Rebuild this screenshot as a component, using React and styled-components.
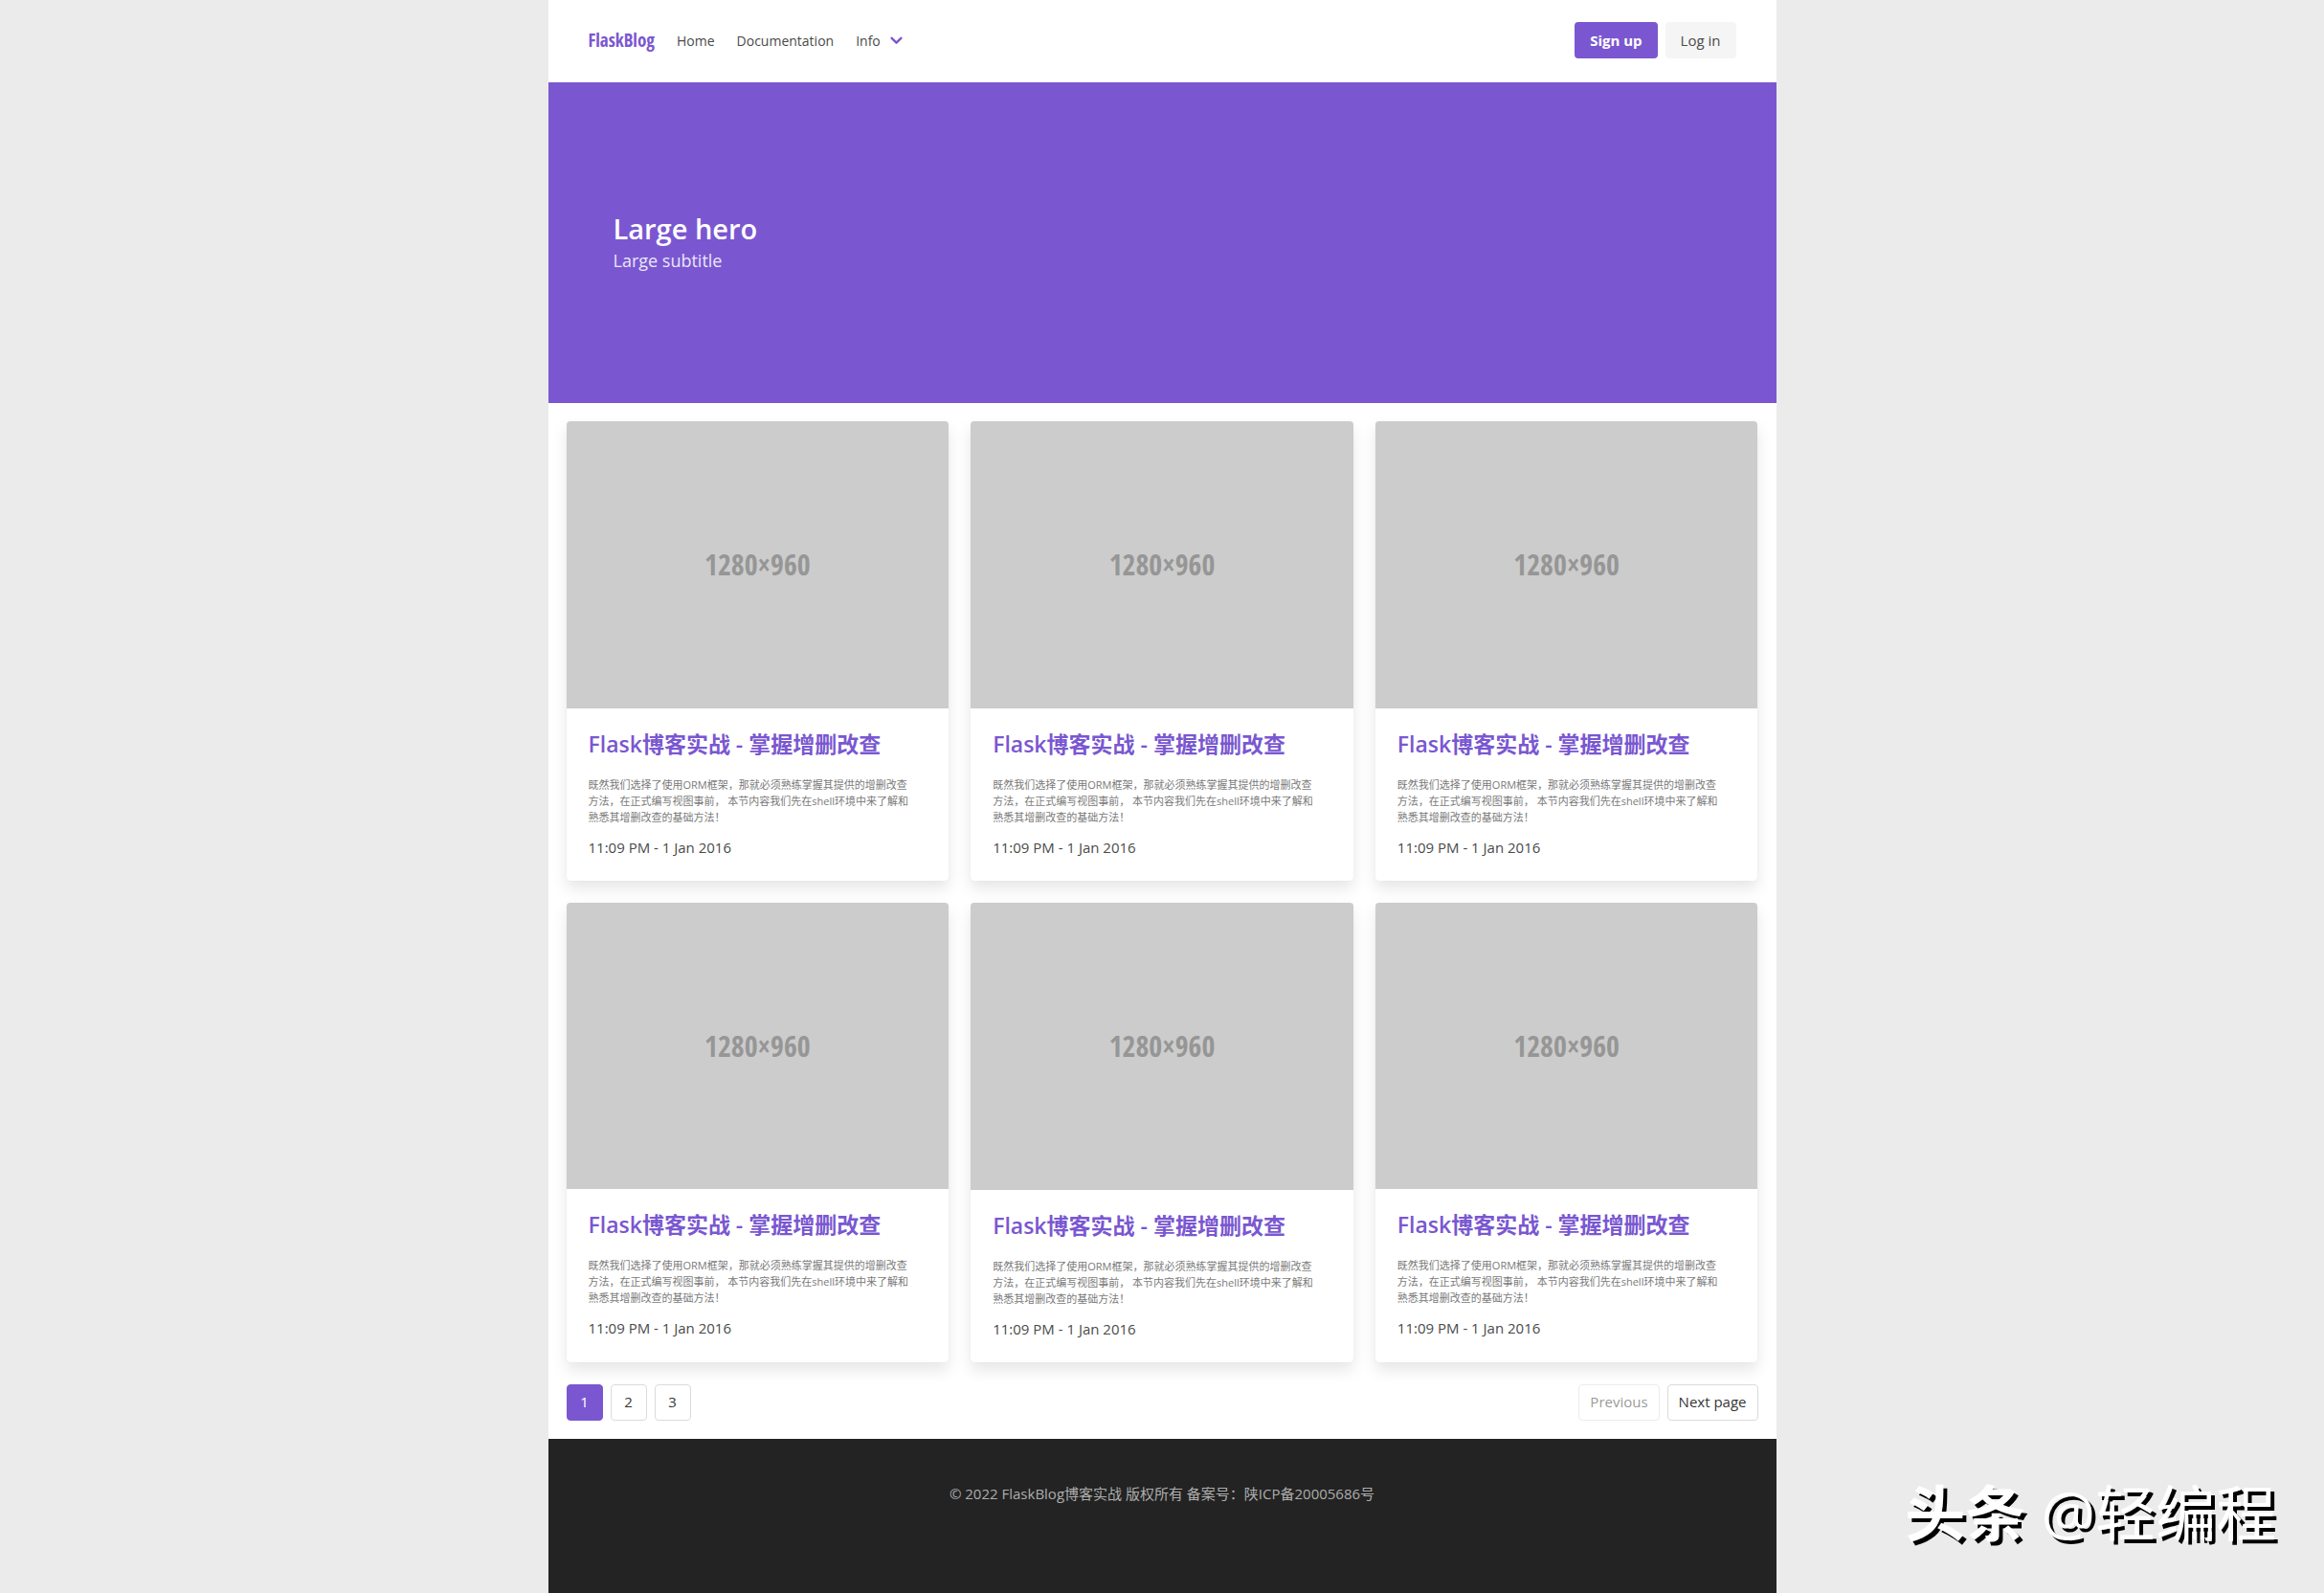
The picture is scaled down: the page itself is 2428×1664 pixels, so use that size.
import styled, { createGlobalStyle } from 'styled-components'

const posts = [1, 2, 3, 4, 5, 6].map((id) => ({
  id,
  title: 'Flask博客实战 - 掌握增删改查',
  lines: [
    '既然我们选择了使用ORM框架，那就必须熟练掌握其提供的增删改查',
    '方法，在正式编写视图事前， 本节内容我们先在shell环境中来了解和',
    '熟悉其增删改查的基础方法！',
  ],
  time: '11:09 PM - 1 Jan 2016',
}))

const Navbar = () => {
  return (
    <Nav>
      <Brand href='#'>FlaskBlog</Brand>
      <NavLink href='#'>Home</NavLink>
      <NavLink href='#'>Documentation</NavLink>
      <NavLink href='#'>
        Info
        <Chevron viewBox='0 0 12 8' aria-hidden='true'>
          <path d='M1.5 1.5 L6 6 L10.5 1.5' />
        </Chevron>
      </NavLink>
      <NavButtons>
        <Button $primary>Sign up</Button>
        <Button>Log in</Button>
      </NavButtons>
    </Nav>
  )
}

const PostCard = ({ title, lines, time }) => {
  return (
    <Card>
      <Placeholder>1280×960</Placeholder>
      <CardContent>
        <CardTitle>
          <a href='#'>{title}</a>
        </CardTitle>
        <Summary>
          {lines.map((line) => (
            <span key={line}>{line}</span>
          ))}
        </Summary>
        <time dateTime='2016-01-01T23:09'>{time}</time>
      </CardContent>
    </Card>
  )
}

const App = () => {
  return (
    <>
      <GlobalStyle />
      <Container>
        <Navbar />
        <Hero>
          <h1>Large hero</h1>
          <p>Large subtitle</p>
        </Hero>
        <Section>
          <Grid>
            {posts.map((post) => {
              return <PostCard key={post.id} {...post} />
            })}
          </Grid>
          <Pagination aria-label='pagination'>
            <PageLink href='#' $current aria-current='page'>
              1
            </PageLink>
            <PageLink href='#'>2</PageLink>
            <PageLink href='#'>3</PageLink>
            <PageSteps>
              <PageStep disabled>Previous</PageStep>
              <PageStep>Next page</PageStep>
            </PageSteps>
          </Pagination>
        </Section>
        <Footer>
          © 2022 FlaskBlog博客实战 版权所有 备案号：陕ICP备20005686号
        </Footer>
      </Container>
      <Watermark>
        <b>头条</b> @轻编程
      </Watermark>
    </>
  )
}

const GlobalStyle = createGlobalStyle`
  :root {
    --primary: #7a57d1;
    --text: #4a4a4a;
    --border: #dbdbdb;
    --radius: 4px;
  }
  * {
    box-sizing: border-box;
    margin: 0;
  }
  body {
    background: #ebebeb;
    color: var(--text);
    font: 15px/23px 'Open Sans', 'Noto Sans CJK SC', sans-serif;
  }
  a {
    color: inherit;
    text-decoration: none;
  }
  button {
    font: inherit;
    cursor: pointer;
  }
`

const Container = styled.div`
  display: flex;
  flex-direction: column;
  max-width: 1283px;
  min-height: 100vh;
  margin: 0 auto;
  background: #fff;
`

const Nav = styled.nav`
  display: flex;
  align-items: center;
  gap: 23px;
  min-height: 86px;
  padding: 0 42px 2px;
`

const Brand = styled.a`
  color: var(--primary);
  font-family: 'Open Sans Condensed', 'Liberation Sans Narrow', sans-serif;
  font-size: 19px;
  font-weight: 700;
`

const NavLink = styled.a`
  display: flex;
  align-items: center;
  gap: 10px;
  font-size: 14px;
`

const Chevron = styled.svg`
  width: 13px;
  height: 9px;
  fill: none;
  stroke: var(--primary);
  stroke-width: 2.2;
  stroke-linecap: round;
  stroke-linejoin: round;
`

const NavButtons = styled.div`
  display: flex;
  gap: 8px;
  margin-left: auto;
`

const Button = styled.button`
  height: 38px;
  padding: 0 16px;
  border: 0;
  border-radius: var(--radius);
  background: ${({ $primary }) => ($primary ? 'var(--primary)' : '#f5f5f5')};
  color: ${({ $primary }) => ($primary ? '#fff' : 'var(--text)')};
  font-weight: ${({ $primary }) => ($primary ? 700 : 400)};
`

const Hero = styled.header`
  display: flex;
  flex-direction: column;
  justify-content: center;
  min-height: 335px;
  padding: 0 68px;
  background: var(--primary);
  color: #fff;

  h1 {
    font-size: 29px;
    font-weight: 600;
    line-height: 36px;
  }
  p {
    font-size: 18px;
    line-height: 30px;
    opacity: 0.85;
  }
`

const Section = styled.main`
  padding: 19px;
`

const Grid = styled.div`
  display: grid;
  grid-template-columns: repeat(3, 1fr);
  gap: 23px;
`

const Card = styled.article`
  border-radius: var(--radius);
  box-shadow: 0 8px 16px rgba(10, 10, 10, 0.1), 0 0 1px rgba(10, 10, 10, 0.1);
  overflow: hidden;
`

const Placeholder = styled.div`
  display: grid;
  place-items: center;
  aspect-ratio: 4 / 3;
  background: #ccc;
  color: #969696;
  font-family: 'Open Sans Condensed', 'Liberation Sans Narrow', sans-serif;
  font-size: 30px;
  font-weight: 700;
`

const CardContent = styled.div`
  padding: 23px;

  time {
    display: block;
  }
`

const CardTitle = styled.h2`
  margin-bottom: 20px;
  color: var(--primary);
  font-size: 23px;
  font-weight: 600;
  line-height: 28px;
`

const Summary = styled.p`
  margin-bottom: 12px;
  color: #7a7a7a;
  font-size: 11px;
  line-height: 17px;

  span {
    display: block;
    white-space: nowrap;
  }
`

const Pagination = styled.nav`
  display: flex;
  gap: 8px;
  margin-top: 23px;
`

const PageLink = styled.a`
  display: grid;
  place-items: center;
  width: 38px;
  height: 38px;
  border: 1px solid
    ${({ $current }) => ($current ? 'var(--primary)' : 'var(--border)')};
  border-radius: var(--radius);
  background: ${({ $current }) => ($current ? 'var(--primary)' : '#fff')};
  color: ${({ $current }) => ($current ? '#fff' : '#363636')};
`

const PageSteps = styled.div`
  display: flex;
  gap: 8px;
  margin-left: auto;
`

const PageStep = styled.button`
  height: 38px;
  padding: 0 11px;
  border: 1px solid var(--border);
  border-radius: var(--radius);
  background: #fff;
  color: #363636;

  &:disabled {
    opacity: 0.5;
  }
`

const Footer = styled.footer`
  flex: 1;
  padding: 46px 23px;
  background: #232323;
  color: #adadad;
  text-align: center;
`

const Watermark = styled.div`
  position: fixed;
  right: 50px;
  bottom: 40px;
  color: #fff;
  font-size: 63px;
  line-height: 88px;
  text-shadow: 4px 4px 0 #000;
`

export default App
